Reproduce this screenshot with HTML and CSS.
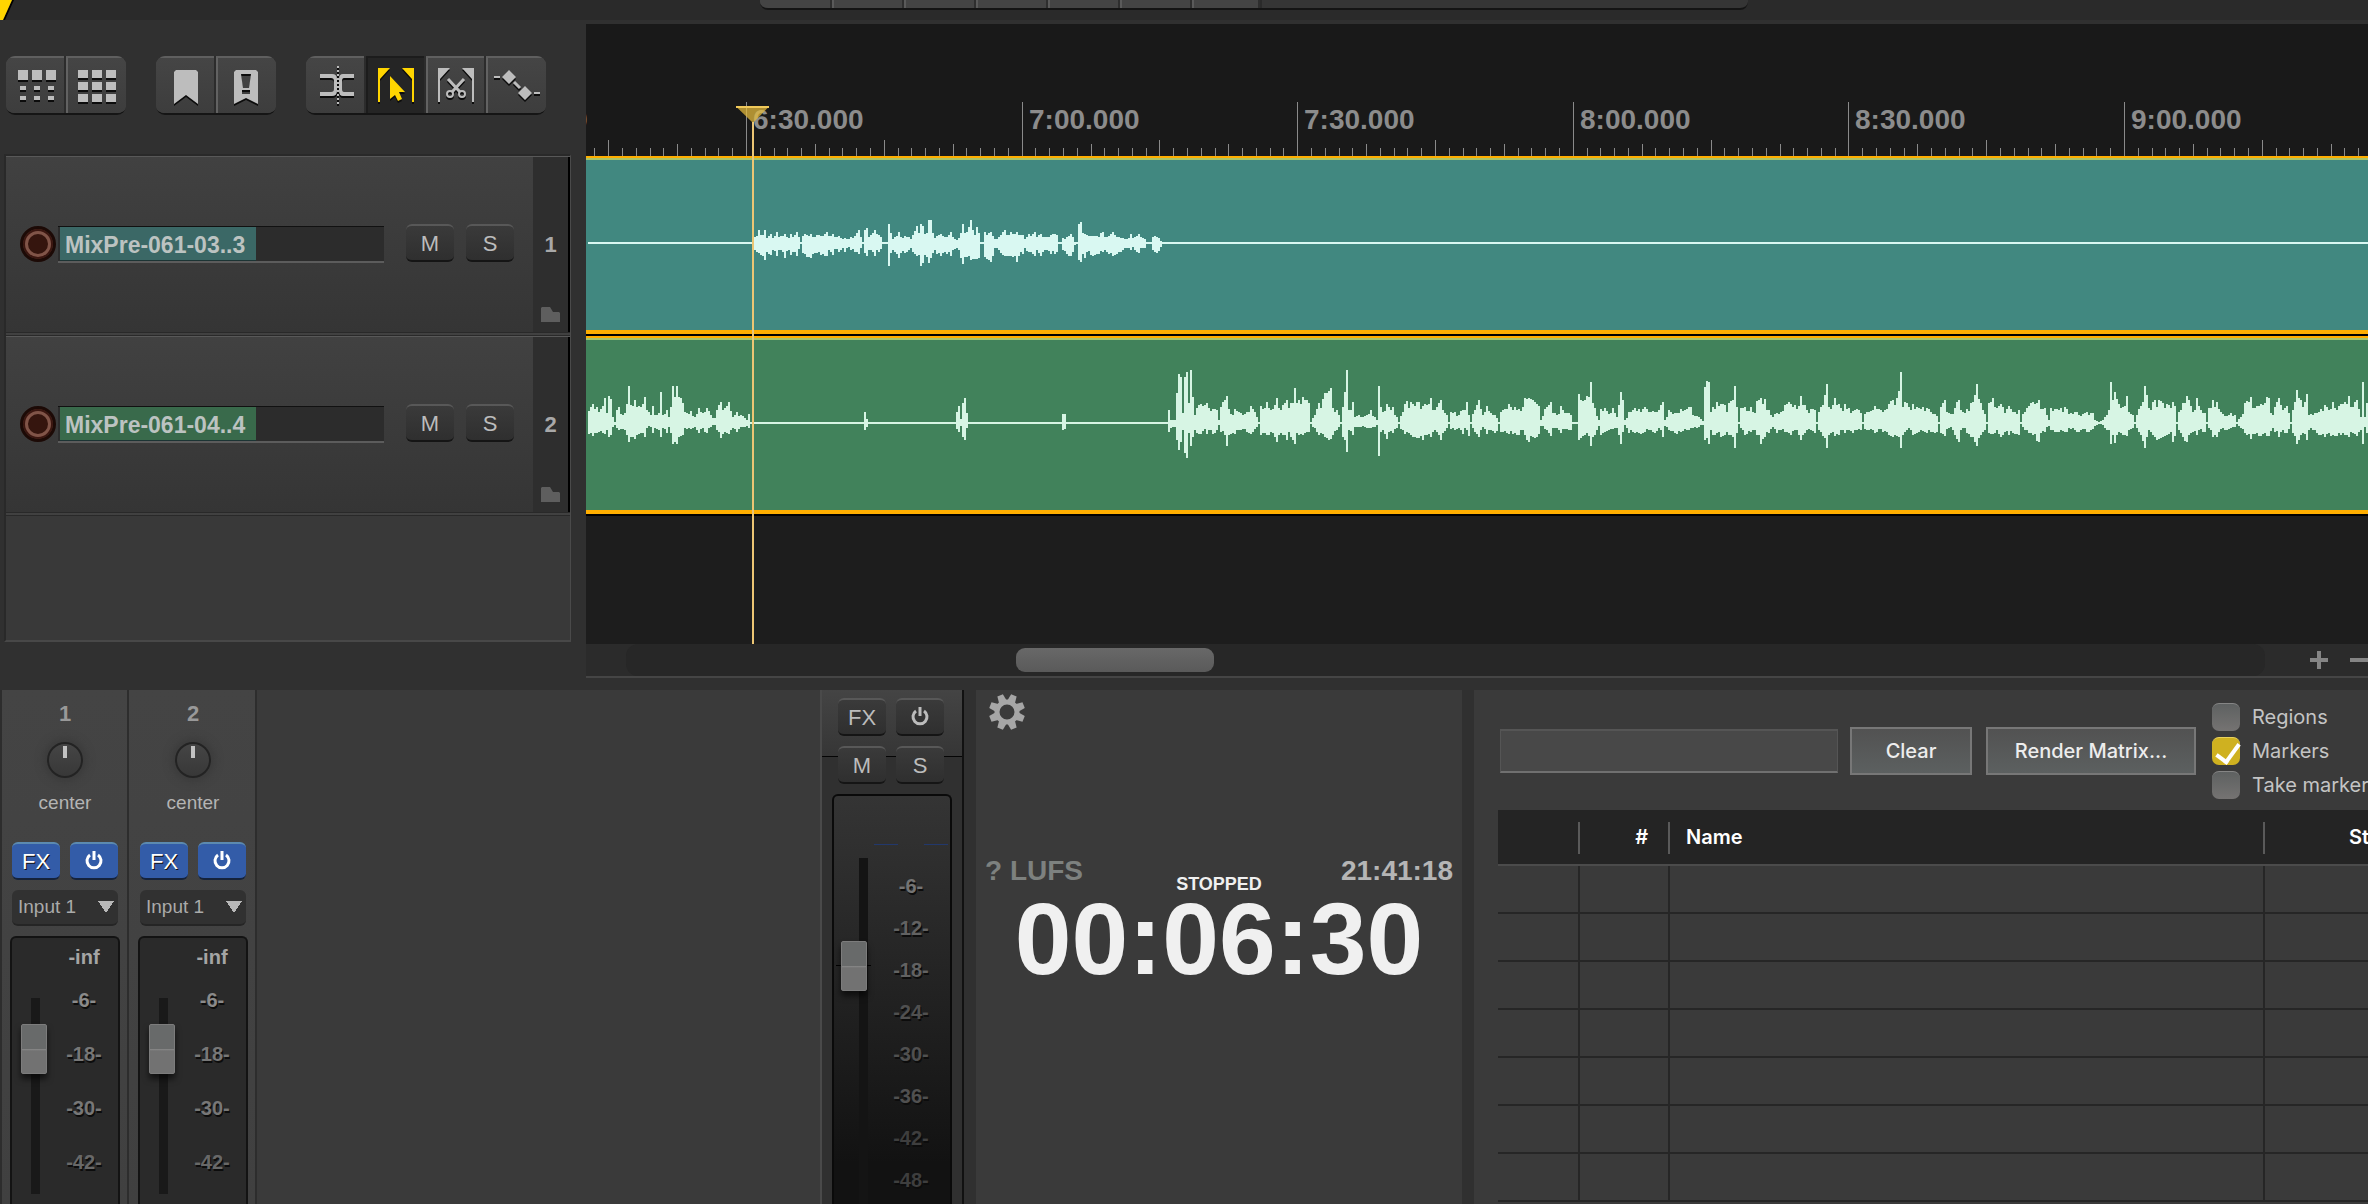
FILE: index.html
```html
<!DOCTYPE html>
<html lang="en">
<head>
<meta charset="utf-8">
<title>Audio session</title>
<link rel="stylesheet" href="styles.css">
</head>
<body>
<header class="topbar">
  <svg class="corner" width="14" height="20" viewBox="0 0 14 20" aria-hidden="true"><path d="M12 0h2L5 20H3z" fill="#000"/><path d="M0 0h12L3 20H0z" fill="#ffd500"/></svg>
  <div class="transport">
    <span class="cell"></span><span class="cell"></span><span class="cell"></span><span class="cell"></span><span class="cell"></span><span class="cell"></span><span class="cell"></span>
    <span class="readout"></span>
  </div>
</header>

<main class="workspace">
  <section class="sidebar">
    <div class="toolbar">
      <div class="group">
        <button class="tool" aria-label="Ripple editing per track"><svg viewBox="0 0 60 58"><path d="M12 14h10v10H12zM26 14h10v10H26zM40 14h10v10H40zM14 30h6v4h-6zM28 30h6v4h-6zM42 30h6v4h-6zM14 40h6v4h-6zM28 40h6v4h-6zM42 40h6v4h-6z"/></svg></button>
        <button class="tool" aria-label="Grid"><svg viewBox="0 0 60 58"><path d="M12 14h10v8H12zM26 14h10v8H26zM40 14h10v8H40zM12 26h10v8H12zM26 26h10v8H26zM40 26h10v8H40zM12 38h10v8H12zM26 38h10v8H26zM40 38h10v8H40z"/></svg></button>
      </div>
      <div class="group">
        <button class="tool" aria-label="Add marker"><svg viewBox="0 0 60 58"><path d="M20 14h20l2 2v32l-12-9-12 9V16z"/></svg></button>
        <button class="tool" aria-label="Add project marker"><svg viewBox="0 0 60 58"><path fill-rule="evenodd" d="M20 14h20l2 2v32l-12-6-12 6V16zM25 18l2 14h6l2-14zM26 34v4h8v-4z"/></svg></button>
      </div>
      <div class="group">
        <button class="tool" aria-label="Split"><svg viewBox="0 0 60 58"><path d="M14 18h12q5 0 5 5v12q0 5-5 5H14v-4h11q3 0 3-3v-8q0-3-3-3H14zM48 18H37q-4 0-4 5v12q0 5 4 5h11v-4H38q-2 0-2-3v-8q0-3 2-3h10z"/><path d="M32 10v40" fill="none" stroke="#bdbdbd" stroke-width="2" stroke-dasharray="2 2"/></svg></button>
        <button class="tool active" aria-label="Select" aria-pressed="true"><svg viewBox="0 0 60 58"><path d="M12 12h12L14 23v23h-2zM48 12H36l10 11v23h2zM24 20v23l5-4 3 6 4-2-3-7h6z"/></svg></button>
        <button class="tool" aria-label="Cut"><svg viewBox="0 0 60 58"><path d="M12 12h12L14 23v23h-2zM48 12H36l10 11v23h2z"/><path d="M22 23l12 13M38 23L26 36" fill="none" stroke="#bdbdbd" stroke-width="3"/><g fill="none" stroke="#bdbdbd" stroke-width="2"><circle cx="24" cy="38" r="3"/><circle cx="36" cy="38" r="3"/></g></svg></button>
        <button class="tool" aria-label="Envelope"><svg viewBox="0 0 60 58"><path d="M23 14l7 7-7 7-7-7zM39 30l7 7-7 7-7-7zM8 20h6v2H8zM48 36h6v2h-6z"/><path d="M28 26l6 6" stroke="#bdbdbd" stroke-width="3"/></svg></button>
      </div>
    </div>
    <div class="tracks">
      <article class="track teal">
        <div class="strip-row">
          <button class="rec" aria-label="Record arm track 1"></button>
          <div class="name"><span>MixPre-061-03..3</span></div>
          <button class="btn">M</button><button class="btn">S</button>
        </div>
        <div class="num"><b>1</b><svg width="19" height="15" viewBox="0 0 19 15" aria-hidden="true"><path d="M1 0h8l3 5h6l1 1v9H0V1z" fill="#5e5e5e"/></svg></div>
      </article>
      <article class="track green">
        <div class="strip-row">
          <button class="rec" aria-label="Record arm track 2"></button>
          <div class="name"><span>MixPre-061-04..4</span></div>
          <button class="btn">M</button><button class="btn">S</button>
        </div>
        <div class="num"><b>2</b><svg width="19" height="15" viewBox="0 0 19 15" aria-hidden="true"><path d="M1 0h8l3 5h6l1 1v9H0V1z" fill="#5e5e5e"/></svg></div>
      </article>
    </div>
  </section>

  <section class="timeline">
    <div class="ruler">
      <svg class="ticks" id="ticks" width="100%" height="54" aria-hidden="true"></svg>
      <ol class="times" id="times"></ol>
    </div>
    <div class="clip teal"><svg id="wave1" width="100%" height="170" aria-hidden="true"></svg></div>
    <div class="clip green"><svg id="wave2" width="100%" height="170" aria-hidden="true"></svg></div>
    <div class="empty"></div>
    <div class="playhead"><svg width="33" height="17" viewBox="0 0 33 17" aria-hidden="true"><path d="M0 .5h33L17 17z" fill="#e8bd3c" fill-opacity=".72"/><path d="M0 1h33" stroke="#f0c95a" stroke-width="2"/></svg></div>
    <div class="scroll">
      <div class="rail"><div class="handle"></div></div>
      <button class="zoom" aria-label="Zoom in"><svg width="18" height="18" viewBox="0 0 18 18"><path d="M9 0v18M0 9h18" stroke="#858585" stroke-width="4"/></svg></button>
      <button class="zoom" aria-label="Zoom out"><svg width="18" height="18" viewBox="0 0 18 18"><path d="M0 9h18" stroke="#858585" stroke-width="4"/></svg></button>
    </div>
  </section>
</main>

<section class="dock">
  <div class="mixer">
    <article class="channel">
      <b class="ch-num">1</b>
      <div class="knob"></div>
      <span class="pan">center</span>
      <div class="pair"><button class="btn blue">FX</button><button class="btn blue" aria-label="FX power"><svg class="power" viewBox="0 0 20 20"><path d="M6 5a7 7 0 1 0 8 0M10 1v9"/></svg></button></div>
      <select class="input" aria-label="Input of channel 1"><option>Input 1</option></select>
      <div class="meter">
        <div class="fader"><input type="range" aria-label="Volume of channel 1" value="82"></div>
        <ul class="scale"><li class="inf">-inf</li><li>-6-</li><li>-18-</li><li>-30-</li><li>-42-</li></ul>
      </div>
    </article>
    <article class="channel">
      <b class="ch-num">2</b>
      <div class="knob"></div>
      <span class="pan">center</span>
      <div class="pair"><button class="btn blue">FX</button><button class="btn blue" aria-label="FX power"><svg class="power" viewBox="0 0 20 20"><path d="M6 5a7 7 0 1 0 8 0M10 1v9"/></svg></button></div>
      <select class="input" aria-label="Input of channel 2"><option>Input 1</option></select>
      <div class="meter">
        <div class="fader"><input type="range" aria-label="Volume of channel 2" value="82"></div>
        <ul class="scale"><li class="inf">-inf</li><li>-6-</li><li>-18-</li><li>-30-</li><li>-42-</li></ul>
      </div>
    </article>
  </div>

  <div class="master">
    <div class="pair"><button class="btn">FX</button><button class="btn" aria-label="Master FX power"><svg class="power" viewBox="0 0 20 20"><path d="M6 5a7 7 0 1 0 8 0M10 1v9"/></svg></button></div>
    <div class="pair"><button class="btn">M</button><button class="btn">S</button></div>
    <div class="master-meter">
      <div class="fader"><input type="range" aria-label="Master volume" value="72"></div>
      <div class="levels">
        <div class="peaks"><i></i><i></i></div>
        <ul class="scale"><li>-6-</li><li>-12-</li><li>-18-</li><li>-24-</li><li>-30-</li><li>-36-</li><li>-42-</li><li>-48-</li></ul>
      </div>
    </div>
  </div>

  <div class="clock">
    <button class="gear" aria-label="Settings"><svg width="36" height="36" viewBox="-18 -18 36 36"><circle r="10" fill="none" stroke="#a6a6a6" stroke-width="5"/><g fill="#a6a6a6"><path id="tooth" d="M-4-11l1-7h6l1 7z" transform="rotate(22.5)"/><use href="#tooth" transform="rotate(45)"/><use href="#tooth" transform="rotate(90)"/><use href="#tooth" transform="rotate(135)"/><use href="#tooth" transform="rotate(180)"/><use href="#tooth" transform="rotate(225)"/><use href="#tooth" transform="rotate(270)"/><use href="#tooth" transform="rotate(315)"/></g></svg></button>
    <div class="status"><span class="lufs">? LUFS</span><span class="state">STOPPED</span><time class="now">21:41:18</time></div>
    <div class="big">00:06:30</div>
  </div>

  <div class="regions">
    <form class="filters">
      <input class="search" type="text" aria-label="Filter">
      <button class="plain clear" type="button">Clear</button>
      <button class="plain render" type="button">Render Matrix...</button>
      <div class="checks">
        <label><input type="checkbox">Regions</label>
        <label><input type="checkbox" checked>Markers</label>
        <label><input type="checkbox">Take markers</label>
      </div>
    </form>
    <table class="list">
      <colgroup><col class="c-state"><col class="c-num"><col class="c-name"><col></colgroup>
      <thead><tr><th></th><th class="right">#</th><th>Name</th><th class="start">Start</th></tr></thead>
      <tbody>
        <tr><td></td><td></td><td></td><td></td></tr>
        <tr><td></td><td></td><td></td><td></td></tr>
        <tr><td></td><td></td><td></td><td></td></tr>
        <tr><td></td><td></td><td></td><td></td></tr>
        <tr><td></td><td></td><td></td><td></td></tr>
        <tr><td></td><td></td><td></td><td></td></tr>
        <tr><td></td><td></td><td></td><td></td></tr>
      </tbody>
    </table>
  </div>
</section>
<script src="script.js"></script>
</body>
</html>
```
FILE: styles.css
```css
* { box-sizing: border-box; }
body {
  margin: 0;
  height: 100vh;
  overflow: hidden;
  display: flex;
  flex-direction: column;
  background: #303030;
  color: #b4b4b4;
  font: 20px/24px "Liberation Sans", Arial, sans-serif;
}
button { font: inherit; color: inherit; padding: 0; border: 0; background: none; }
ul, ol { list-style: none; margin: 0; padding: 0; }
svg { display: block; }

/* top bar */
.topbar { flex: none; height: 20px; background: #2a2a2a; display: flex; }
.corner { flex: none; }
.transport {
  display: flex;
  height: 10px;
  margin-left: 746px;
  width: 988px;
  background: #353535;
  border-bottom: 2px solid #141414;
  border-radius: 0 0 8px 8px;
  overflow: hidden;
}
.cell { width: 72px; background: #444; border-right: 2px solid #5a5a5a; box-shadow: inset -2px 0 #2e2e2e; }
.cell:first-child { width: 74px; }
.cell:nth-child(7) { border-right-color: #2a2a2a; width: 68px; }

/* workspace */
.workspace { flex: none; display: grid; grid-template-columns: 586px minmax(0, 1fr); }
.toolbar { display: flex; gap: 30px; padding: 36px 6px 39px; }
.group {
  display: flex;
  height: 59px;
  border-radius: 9px;
  border-bottom: 2px solid #151515;
  overflow: hidden;
  background: #454545;
}
.tool { width: 60px; border-top: 2px solid #5f5f5f; background: linear-gradient(#454545, #3d3d3d); }
.tool + .tool { border-left: 2px solid #626262; box-shadow: -2px 0 #2c2c2c; }
.tool svg { width: 60px; height: 58px; margin-top: -2px; fill: #bdbdbd; filter: drop-shadow(0 2px 0 #0c0c0c); }
.tool + .tool svg { margin-left: -2px; }
.tool.active { background: #252525; border-color: #1c1c1c; }
.tool.active svg { fill: #ffd500; }

.tracks {
  width: 567px;
  height: 488px;
  margin-left: 4px;
  border: 2px solid #292929;
  border-right: 1px solid #4a4a4a;
  border-bottom: 2px solid #484848;
  background: #393939;
}
.track {
  height: 180px;
  display: flex;
  background: linear-gradient(#414141, #353535);
  border-top: 1px solid #585858;
  border-bottom: 4px double #292929;
}
.strip-row { flex: 1; display: flex; align-items: flex-start; padding: 67px 19px 0 14px; }
.rec {
  width: 36px; height: 36px; margin-top: 2px; flex: none;
  border-radius: 50%;
  border: 3px solid #1c0a06;
  background: #35150e;
  box-shadow: inset 0 0 0 2px #3a1610, inset 0 0 0 5px #805448;
}
.name {
  flex: 1;
  height: 37px; margin: 2px 22px 0 2px; padding: 0 0 0 2px;
  border-top: 1px solid #111;
  border-bottom: 2px solid #5c5c5c;
  background: #2c2c2c;
  display: flex;
  font: bold 23px/36px "Liberation Sans", Arial, sans-serif;
  color: #bcc3c1;
}
.name span { width: 196px; padding-left: 5px; white-space: nowrap; overflow: hidden; border-bottom: 1px solid #1c3434; }
.teal .name span { background: #3b6866; }
.green .name span { background: #396a4b; }
.btn {
  width: 48px; height: 38px; flex: none;
  border-radius: 6px;
  border-top: 2px solid #585858;
  border-bottom: 2px solid #151515;
  background: linear-gradient(#3a3a3a, #2f2f2f);
  font-size: 22px; line-height: 33px;
  color: #bcbcbc;
}
.strip-row .btn + .btn { margin-left: 12px; }
.num {
  width: 37px;
  background: #2e2e2e;
  border-right: 2px solid #000;
  display: flex; flex-direction: column; align-items: center; justify-content: space-between;
  padding: 76px 0 10px;
  font-size: 22px;
  color: #a8a8a8;
}

/* timeline */
.timeline { position: relative; margin: 4px 0 12px; overflow: hidden; background: #1d1d1d; }
.ruler { height: 132px; padding-top: 78px; background: #191919; position: relative; }
.times li {
  position: absolute; top: 80px;
  font: bold 28px/32px "Liberation Sans", Arial, sans-serif;
  color: #8c8c8c;
}
.clip { height: 180px; border-top: 2px solid #ffae00; border-bottom: 2px solid #000; }
.clip svg { box-sizing: content-box; border-top: 2px solid #a9c468; border-bottom: 4px solid #ffae00; }
.clip.teal svg { background: #418880; fill: #d9f8f2; }
.clip.green svg { background: #41825b; fill: #d7f5e4; }
.empty { height: 128px; }
.playhead { position: absolute; left: 150px; top: 82px; width: 33px; height: 538px; }
.playhead::after { content: ""; position: absolute; left: 16px; top: 16px; bottom: 0; width: 2px; background: #ecc674; }
.scroll {
  height: 34px; display: flex; align-items: center;
  padding-left: 40px;
  background: #2b2b2b; border-bottom: 2px solid #454545;
}
.rail { flex: 1; height: 32px; padding: 4px 0 0 390px; background: #272727; border-radius: 12px; margin-right: 45px; }
.handle { width: 198px; height: 24px; border-radius: 9px; background: linear-gradient(#686868, #5a5a5a); }
.zoom { width: 18px; flex: none; }
.zoom + .zoom { margin-left: 22px; }

/* dock */
.dock {
  flex: 1; min-height: 0;
  display: grid;
  grid-template-columns: 820px 144px 498px minmax(0, 1fr);
  grid-template-rows: minmax(0, 1fr);
  overflow: hidden;
}
.mixer { display: flex; background: #3a3a3a; overflow: hidden; }
.channel {
  width: 128px; flex: none;
  display: flex; flex-direction: column;
  padding: 12px 11px 0;
  background: linear-gradient(#444, #404040);
  box-shadow: inset -2px 0 #2d2d2d;
}
.channel:first-child { width: 129px; padding-left: 12px; box-shadow: inset -2px 0 #2d2d2d, inset 2px 0 #2d2d2d; }
.ch-num { text-align: center; font-size: 22px; color: #999; }
.knob {
  width: 36px; height: 36px; margin: 16px auto 0;
  border-radius: 50%;
  border: 2px solid #232323;
  background: linear-gradient(#c2c2c2, #c2c2c2) 50% 2px / 4px 12px no-repeat, linear-gradient(#454545, #383838);
  box-shadow: 0 0 8px 3px #3a3a3a;
}
.pan { margin: 13px 0 27px; text-align: center; font-size: 19px; }
.pair { display: flex; justify-content: space-between; width: 106px; }
.power { width: 20px; height: 20px; margin: -2px auto 0; fill: none; stroke: currentColor; stroke-width: 3; }
.btn.blue {
  background: #335ca8; color: #fff;
  border-top-color: #5c8ab0; border-bottom-color: #15233c;
  text-shadow: 1px 1px #111;
}
.input {
  appearance: none;
  width: 106px; height: 36px; margin: 10px 0; flex: none;
  border: 0; border-bottom: 2px solid #252525; border-radius: 6px;
  padding: 0 6px;
  font: 19px/34px "Liberation Sans", Arial, sans-serif;
  color: #aaa;
  background-color: #313131;
  background-image: linear-gradient(to top right, #0000 50%, #b8b8b8 51%), linear-gradient(to top left, #0000 50%, #b8b8b8 51%);
  background-size: 8px 12px;
  background-position: 86px 11px, 94px 11px;
  background-repeat: no-repeat;
}
.meter {
  flex: 1; display: flex;
  width: 110px; margin-left: -2px;
  border: 2px solid #131313; border-bottom: 0; border-radius: 6px 6px 0 0;
  background: #2a2a2a;
}
.fader { width: 44px; flex: none; }
.fader input {
  appearance: none;
  writing-mode: vertical-lr; direction: rtl;
  display: block; width: 26px; margin: 0;
  background: none;
}
.fader input::-webkit-slider-runnable-track { width: 26px; background: none; }
.fader input::-webkit-slider-thumb {
  appearance: none;
  width: 26px; height: 50px;
  border-radius: 2px;
  border: 1px solid #7c7c7c;
  background: linear-gradient(#686a6a 49%, #8a8a8a 50%, #727272 54%, #727272);
  box-shadow: 0 5px 6px #0009;
}
.meter .fader { padding: 60px 0 0 9px; background: linear-gradient(#191919, #191919) 19px 60px / 9px 196px no-repeat; }
.meter .fader input { height: 196px; }
.scale { flex: 1; text-align: center; font-weight: bold; color: #777; text-shadow: 1px 2px #0c0c0c; }
.meter .scale { padding: 7px 6px 0 0; }
.scale li { height: 54px; }
.scale .inf { height: 43px; color: #a5a5a5; text-shadow: none; }
.meter li:nth-child(2) { color: #8a8a8a; }
.meter li:nth-child(5) { color: #686868; }

.master {
  display: flex; flex-direction: column;
  padding: 8px 0 0 16px;
  border-left: 2px solid #4a4a4a;
  border-right: 2px solid #111;
  background: linear-gradient(#444, #363636) 0 0 / 100% 66px no-repeat, linear-gradient(#050505, #050505) 0 66px / 100% 1px no-repeat, #303030;
}
.master .pair + .pair { margin-top: 10px; }
.master-meter {
  flex: 1; min-height: 0; display: flex;
  width: 120px; margin: 10px 0 0 -6px;
  border: 2px solid #0a0a0a; border-bottom: 0; border-radius: 6px 6px 0 0;
  background: linear-gradient(#343434, #2b2b2b 25%, #121212 90%);
}
.master .fader {
  width: 40px; padding: 62px 0 0 7px;
  background: linear-gradient(#000, #000) 2px 169px / 35px 1px no-repeat, linear-gradient(#141414, #141414) 25px 62px / 9px 100% no-repeat;
}
.master .fader input { height: 346px; }
.levels { flex: 1; }
.peaks { display: flex; justify-content: space-between; padding: 48px 2px 0 0; }
.peaks i { width: 24px; height: 1px; background: #22386c; }
.master .scale { padding: 29px 2px 0 0; }
.master .scale li { height: 42px; color: #505050; }
.master .scale li:nth-child(1) { color: #747474; }
.master .scale li:nth-child(2), .master .scale li:nth-child(3) { color: #626262; }
.master .scale li:nth-child(n+7) { color: #3e3e3e; }

.clock { margin-left: 12px; background: #3a3a3a; padding: 4px 9px 0; }
.gear { display: block; margin-left: 4px; }
.status { display: flex; justify-content: space-between; align-items: flex-start; margin-top: 125px; font-weight: bold; font-size: 28px; line-height: 32px; }
.lufs, .now { flex: 1; }
.lufs { color: #7d817f; }
.state { font-size: 18px; line-height: 20px; color: #f0f0f0; margin-top: 19px; }
.now { text-align: right; color: #b5b5b5; }
.big { font-weight: bold; font-size: 102px; line-height: 96px; text-align: center; color: #f0f0f0; margin-top: -3px; }

.regions {
  margin-left: 12px; padding: 13px 0 0 24px;
  background: #3a3a3a;
  overflow: hidden;
  font-family: Inter, "Liberation Sans", sans-serif;
}
.filters { display: flex; align-items: center; margin-left: 2px; }
.search {
  width: 338px; height: 44px; flex: none;
  border: 1px solid #555; border-top: 2px solid #555; border-bottom: 2px solid #707070;
  background: #484848; color: #ddd; font: inherit; padding: 0 8px;
}
.plain {
  height: 48px; flex: none;
  border: 2px solid #777;
  background: linear-gradient(#525252, #5c6060);
  color: #ededed; font-weight: 500;
}
.clear { width: 122px; margin: 0 14px 0 12px; }
.render { width: 210px; margin-right: 16px; }
.checks { display: flex; flex-direction: column; gap: 6px; flex: none; }
.checks label { display: flex; align-items: center; gap: 12px; height: 28px; color: #c4c4c4; white-space: nowrap; }
.checks input {
  appearance: none;
  width: 28px; height: 28px; margin: 0;
  border-radius: 7px; border-top: 1px solid #858585;
  background: linear-gradient(#5e6161, #757372);
}
.checks input:checked { background: #cfb120; border-top-color: #e9d25c; }
.checks input:checked::after {
  content: ""; display: block;
  width: 10px; height: 20px; margin: 1px 0 0 9px;
  border: solid #fff; border-width: 0 4px 4px 0;
  transform: rotate(36deg);
}
.list { margin-top: 11px; width: 100%; table-layout: fixed; border-collapse: separate; border-spacing: 0; }
.c-state { width: 82px; }
.c-num { width: 90px; }
.c-name { width: 595px; }
.list th {
  height: 56px; padding: 0 16px;
  text-align: left; font-weight: 600; color: #fff;
  border-bottom: 2px solid #4b4b4b;
  background: linear-gradient(#5a5a5a, #5a5a5a) 100% 12px / 2px 32px no-repeat, #242424;
  overflow: hidden; white-space: nowrap;
}
.list .right { text-align: right; padding-right: 22px; }
.list .start { padding-left: 84px; padding-right: 0; }
.list td { height: 48px; padding: 0; border-bottom: 2px solid #262626; border-right: 2px solid #262626; }
.list th:last-child { background: #242424; }
.list td:last-child { border-right: 0; }
```
FILE: script.js
```js
const NS = 'http://www.w3.org/2000/svg';

// Ruler: one label every 30 seconds, twenty ticks between two labels.
const SPACING = 1378 / 5;
const FIRST = 160 - SPACING;
const ticks = document.getElementById('ticks');
const times = document.getElementById('times');
const visible = times.clientWidth;
const tickHeight = i => (i % 20 === 0 ? 54 : i % 10 === 0 ? 16 : i % 5 === 0 ? 12 : 8);
let d = '';
for (let i = 0; FIRST + i * SPACING / 20 < visible; i++) {
  const x = Math.round(FIRST + i * SPACING / 20);
  if (x >= 0) d += `M${x} 54v${-tickHeight(i)}h1v${tickHeight(i)}z`;
}
const tickPath = document.createElementNS(NS, 'path');
tickPath.setAttribute('d', d);
tickPath.setAttribute('fill', '#8a8a8a');
ticks.append(tickPath);
for (let i = 0; FIRST + i * SPACING < visible; i++) {
  const s = 360 + i * 30;
  const li = document.createElement('li');
  li.textContent = `${Math.floor(s / 60)}:${String(s % 60).padStart(2, '0')}.000`;
  li.style.left = `${Math.round(FIRST + i * SPACING) + 7}px`;
  times.append(li);
}

// Peak lists: "position top bottom", in units of the zoom that each block was stored at.
const takeA = `20 727 731,425 727 731,428 710 750,438 690 760,445 705 765,452 690 780,460 715 755,467 702 765,474 715 750,482 697 768,490 710 750,496 708 755,502 702 773,510 715 750,516 702 765,524 712 755,532 697 768,538 710 748,541 727 731,546 708 760,552 702 762,558 705 770,566 702 773,574 710 760,582 705 758,590 708 765,598 702 768,604 697 768,610 708 750,618 703 765,626 712 748,634 708 755,642 718 745,650 715 755,658 718 742,666 712 750,672 708 755,678 700 755,684 690 762,690 712 745,694 727 731,698 690 760,703 684 767,708 710 750,714 705 750,721 690 767,728 703 750,734 705 755,739 712 748,741 727 731,751 727 731,756 673 797,760 700 760,766 718 750,772 712 755,781 697 773,788 710 760,796 708 760,804 712 750,812 718 745,818 705 755,824 678 767,829 700 765,835 672 797,840 678 790,846 703 765,850 700 770,855 660 790,860 660 773,864 700 760,870 715 750,876 708 762,884 703 767,892 712 755,900 710 762,908 697 768,914 712 750,922 720 745,930 715 750,937 672 792,943 700 770,948 695 770,951 680 768,957 660 780,962 690 778,966 705 778,972 680 778,978 700 775,982 727 731,986 727 731,988 697 775,994 697 770,1000 700 780,1005 697 785,1012 708 768,1018 718 745,1025 712 750,1032 705 760,1040 690 768,1048 705 768,1056 697 768,1064 703 768,1070 697 785,1078 705 768,1086 705 762,1090 718 745,1098 702 755,1106 708 755,1114 697 768,1120 710 750,1130 702 767,1138 710 750,1146 712 750,1154 705 762,1162 703 762,1168 705 755,1172 727 731,1178 727 733,1184 715 750,1192 712 762,1198 708 768,1203 702 768,1209 710 755,1213 727 735,1218 727 731,1222 672 780,1228 666 785,1232 700 762,1237 702 773,1244 705 755,1252 708 765,1262 708 765,1270 712 762,1280 697 755,1288 712 750,1296 708 762,1305 697 768,1312 705 765,1320 712 755,1330 715 750,1340 718 745,1348 703 750,1354 715 740,1362 712 750,1369 702 760,1376 712 745,1383 718 745,1388 727 731,1398 727 731,1402 712 750,1408 708 755,1412 710 760,1418 715 752,1424 722 740,1428 727 731,9000 727 731`;
const takeB = `14 258 345,18 260 340,22 252 347,28 262 340,34 275 335,40 258 340,44 234 342,47 280 330,50 228 352,54 236 345,57 290 320,61 306 315,64 270 325,68 262 330,74 285 328,80 280 330,85 198 365,90 255 350,95 240 358,101 260 345,107 262 340,113 230 350,118 270 325,122 285 322,127 258 340,132 285 325,137 280 330,141 216 352,144 285 325,150 270 340,154 290 320,157 260 340,161 198 372,165 230 365,169 198 372,174 230 350,180 250 345,184 275 325,192 272 328,200 290 322,207 264 340,213 280 325,221 264 340,227 285 320,234 295 315,238 270 330,245 246 355,251 265 335,259 246 342,264 272 330,268 290 325,273 276 335,280 285 322,287 295 322,291 300 318,294 282 325,298 306 312,492 306 312,495 276 330,499 298 320,503 306 312,654 306 312,657 275 328,660 258 335,664 298 318,668 250 350,670 234 360,674 280 325,678 306 312,838 306 312,841 282 330,846 282 328,849 306 312,1021 306 312,1025 270 335,1030 300 325,1035 300 320,1039 220 360,1043 162 390,1047 172 365,1051 280 330,1055 170 400,1058 156 413,1061 250 340,1064 150 378,1067 230 350,1070 285 330,1076 265 340,1081 252 342,1088 255 328,1092 250 342,1097 265 330,1103 268 342,1110 270 330,1113 300 315,1117 260 335,1122 240 345,1127 228 378,1131 268 345,1136 285 340,1142 268 342,1150 280 330,1158 282 328,1164 275 340,1170 258 342,1175 275 328,1180 290 322,1183 306 312,1187 258 345,1192 265 340,1198 246 345,1204 270 335,1209 255 350,1214 234 365,1220 270 340,1225 255 345,1230 240 360,1236 265 335,1240 250 350,1245 205 372,1249 250 340,1254 240 345,1259 230 345,1264 240 340,1270 250 335,1275 306 312,1279 285 325,1286 250 345,1292 265 340,1297 220 352,1302 218 355,1307 205 358,1311 265 345,1318 270 330,1323 285 322,1326 306 312,1330 262 350,1336 150 396,1340 270 330,1346 246 345,1351 290 320,1358 285 320,1366 288 322,1372 285 325,1378 270 325,1384 290 320,1388 300 315,1391 198 407,1395 260 335,1400 275 330,1405 252 358,1410 262 335,1416 262 340,1421 285 328,1427 306 312,1432 275 330,1438 252 342,1446 246 345,1452 252 350,1460 246 355,1468 258 360,1475 255 345,1482 234 350,1487 270 335,1493 262 335,1500 240 360,1505 270 340,1510 285 325,1514 306 312,1518 276 328,1524 275 330,1530 285 325,1537 270 342,1541 270 325,1544 246 330,1549 285 348,1552 306 312`;
const takeC = `116 306 312,120 270 335,128 240 350,133 285 322,140 258 342,146 280 330,155 285 340,160 306 312,165 275 335,172 268 340,178 252 342,186 262 340,192 268 345,198 260 330,203 234 345,209 234 365,215 240 350,220 246 355,226 258 342,230 300 318,236 268 328,243 246 348,249 280 325,256 282 330,261 258 340,268 278 328,278 285 330,281 306 312,286 306 312,290 222 360,294 240 355,300 240 345,305 230 348,309 186 378,313 250 350,317 265 345,321 300 318,326 268 345,332 265 335,338 282 330,345 264 328,352 290 325,358 216 372,362 240 335,366 300 315,372 275 340,380 265 340,388 268 340,396 262 335,404 275 330,412 275 340,420 270 325,426 246 352,430 300 318,436 270 330,446 278 340,456 268 335,464 268 330,471 260 325,476 285 325,484 292 320,490 302 314,495 200 360,500 186 372,503 275 330,508 262 345,514 246 340,520 252 350,525 255 345,530 275 335,534 250 345,538 240 350,542 198 383,546 262 340,549 306 312,554 265 325,560 262 345,567 260 335,574 280 330,580 240 345,584 234 372,591 236 350,597 270 340,603 290 320,605 306 312,610 278 340,618 275 330,626 252 335,633 252 345,640 255 330,645 258 345,649 228 360,654 255 345,660 270 330,666 268 330,672 270 340,676 306 312,683 262 335,688 225 355,691 192 383,695 262 345,700 255 335,704 234 348,710 252 345,716 265 330,721 252 340,727 265 330,733 272 340,740 268 330,746 280 330,751 306 312,758 275 330,768 258 340,777 268 328,784 275 335,792 252 345,800 240 352,806 234 348,811 156 383,815 260 345,819 245 335,825 262 325,831 252 345,838 262 340,845 268 330,853 265 340,860 275 335,868 282 340,873 306 312,878 262 340,882 240 348,887 275 328,892 282 320,898 265 345,905 240 365,909 270 330,915 280 325,920 268 340,927 245 350,931 225 365,935 192 378,940 250 345,946 270 335,950 306 312,954 250 340,961 234 342,967 265 330,974 252 350,980 280 335,987 258 345,994 275 340,1002 270 345,1007 306 312,1012 275 330,1020 258 340,1027 246 345,1034 240 365,1040 268 340,1046 265 335,1050 300 318,1056 265 330,1064 268 335,1072 264 330,1080 268 335,1090 282 325,1098 275 335,1106 282 328,1114 276 335,1122 280 328,1127 300 318,1133 306 312,1139 300 316,1143 290 325,1147 270 330,1151 186 372,1155 240 345,1158 216 368,1164 252 335,1170 262 345,1177 228 348,1182 275 330,1187 285 325,1191 306 312,1196 268 335,1201 258 345,1206 198 383,1210 225 350,1214 265 330,1220 245 345,1228 240 358,1236 248 350,1243 252 345,1248 265 335,1253 246 365,1258 306 312,1263 275 330,1269 250 350,1274 228 365,1279 240 345,1286 275 335,1291 234 345,1296 270 328,1303 280 335,1308 306 312,1312 265 325,1317 240 352,1322 245 350,1329 275 328,1337 288 330,1345 278 325,1352 285 320,1356 305 312,1362 290 325,1370 250 340,1377 230 358,1384 265 342,1392 258 348,1400 250 340,1407 234 348,1413 285 325,1418 262 335,1423 234 350,1430 270 330,1436 258 340,1441 280 328,1444 306 312,1448 270 340,1453 210 372,1458 240 345,1463 262 340,1469 222 360,1474 285 330,1482 278 330,1490 275 345,1497 255 350,1504 270 340,1510 246 345,1517 270 348,1524 252 345,1531 246 345,1537 228 350,1543 262 340,1550 240 348,1556 290 330,1560 186 372,1564 290 320,1568 250 340`;

// Draws one bar per two-pixel column, from the peaks above and below the middle line.
function drawWave(id, blocks) {
  const points = blocks.flatMap(({ data, zoom, start, middle }) =>
    data.split(',').map(p => {
      const [x, top, bottom] = p.split(' ').map(Number);
      return { x: start + x / zoom, up: (middle - top) / 3, down: (bottom - middle) / 3 };
    }));
  const quiet = p => p.up < 2 && p.down < 2.5;
  const grain = n => { const v = Math.sin(n * 12.9898) * 43758.5453; return v - Math.floor(v); };
  let path = '';
  let k = 0;
  for (let x = 2; x < visible; x += 2) {
    while (k + 1 < points.length && points[k + 1].x < x) k++;
    const a = points[k];
    const b = points[k + 1] || a;
    let up, down;
    if (b.x < x + 2) {
      ({ up, down } = b);
    } else if (quiet(a) && quiet(b)) {
      up = down = 1;
    } else {
      const t = (x + 1 - a.x) / (b.x - a.x || 1);
      const mix = key => (quiet(a) ? b[key] * 0.8 : quiet(b) ? a[key] * 0.8 : a[key] + (b[key] - a[key]) * t);
      up = mix('up') * (0.72 + 0.4 * grain(x));
      down = mix('down') * (0.72 + 0.4 * grain(x + 1));
    }
    up = Math.max(1, Math.round(up));
    down = Math.max(1, Math.round(down));
    path += `M${x} ${83 - up}h2v${up + down}h-2z`;
  }
  const bars = document.createElementNS(NS, 'path');
  bars.setAttribute('d', path);
  document.getElementById(id).append(bars);
}
drawWave('wave1', [{ data: takeA, zoom: 2.45, start: -6, middle: 729 }]);
drawWave('wave2', [
  { data: takeB, zoom: 1.742, start: -6, middle: 309 },
  { data: takeC, zoom: 1.62, start: 814, middle: 309 },
]);
```
